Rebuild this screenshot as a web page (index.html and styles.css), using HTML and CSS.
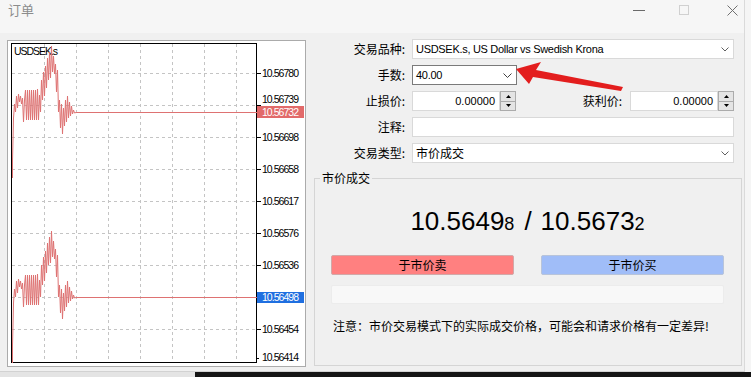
FILE: index.html
```html
<!DOCTYPE html>
<html lang="zh-CN">
<head>
<meta charset="utf-8">
<title>订单</title>
<link rel="stylesheet" href="styles.css">
</head>
<body>
<div class="window">
  <div class="titlebar">
    <span class="title">订单</span>
    <div class="controls">
      <span class="ctl ctl-min"><svg width="12" height="1" viewBox="0 0 12 1"><path d="M0 0.5H12" stroke="#6a6a6a" stroke-width="1"/></svg></span>
      <span class="ctl ctl-max"><svg width="10" height="10" viewBox="0 0 10 10"><rect x="0.5" y="0.5" width="9" height="9" fill="none" stroke="#d0d0d0"/></svg></span>
      <span class="ctl ctl-close"><svg width="11" height="11" viewBox="0 0 11 11"><path d="M0.5 0.5L10.5 10.5M10.5 0.5L0.5 10.5" stroke="#707070" stroke-width="1"/></svg></span>
    </div>
  </div>
  <div class="content">
    <div class="chart-panel">
      <svg class="chart" width="297" height="325" viewBox="8 41 297 325">
        <g class="grid">
          <path d="M44.5 44V362M76.5 44V362M108.5 44V362M140.5 44V362M172.5 44V362M204.5 44V362M236.5 44V362"/>
          <path d="M12 73.5H256M12 105.5H256M12 137.5H256M12 169.5H256M12 201.5H256M12 233.5H256M12 265.5H256M12 297.5H256M12 329.5H256"/>
        </g>
        <rect x="11.5" y="43.5" width="245" height="319" fill="none" stroke="#000" stroke-width="1"/>
        <path class="ticks" d="M257 73.5H261M257 105.5H261M257 137.5H261M257 169.5H261M257 201.5H261M257 233.5H261M257 265.5H261M257 329.5H261M257 358.5H259"/>
        <text class="sym" x="14" y="55" textLength="44">USDSEK.s</text>
        <polyline id="series" class="red-series" points="12.5,178 12.5,160 13,140 13.5,118 14.5,104 15.5,112 16.5,96 17.5,108 18.5,94 19.5,102 20.5,96 21.5,104 22.5,98 23.5,122 24.5,100 25.5,90 26.5,120 27.5,90 28.5,120 29.5,90 30.5,120 31.5,90 32.5,120 33.5,90 34.5,120 35.5,90 36.5,120 37.5,89 38.5,120 39.5,95 40.5,112 41.5,80 42.5,100 43.5,72 44.5,96 45.5,66 46.5,88 47.5,58 48.5,80 49.5,52 50.5,78 51.5,46 52.5,72 53.5,56 54.5,74 55.5,64 56.5,92 57.5,70 58.5,112 59.5,100 60.5,128 61.5,104 62.5,134 63.5,108 64.5,126 65.5,100 66.5,122 67.5,96 68.5,118 69.5,102 70.5,116 71.5,106 72.5,114 73.5,110 74.5,113 76,112.5 257,112.5"/>
        <use href="#series" class="blue-series" transform="translate(0,185)"/>
        <g class="axis">
          <text x="262" y="77" textLength="37">10.56780</text>
          <text x="262" y="103" textLength="37">10.56739</text>
          <text x="262" y="141" textLength="37">10.56698</text>
          <text x="262" y="173" textLength="37">10.56658</text>
          <text x="262" y="205" textLength="37">10.56617</text>
          <text x="262" y="237" textLength="37">10.56576</text>
          <text x="262" y="269" textLength="37">10.56536</text>
          <text x="262" y="333" textLength="37">10.56454</text>
          <text x="262" y="361" textLength="37">10.56414</text>
        </g>
        <rect class="tag-red" x="257" y="106" width="47" height="12"/>
        <text class="axis tag-text" x="262" y="116" textLength="37">10.56732</text>
        <rect class="tag-blue" x="257" y="292" width="47" height="11"/>
        <text class="axis tag-text" x="262" y="301" textLength="37">10.56498</text>
      </svg>
    </div>
    <div class="pane">
      <div class="form">
        <label class="lbl">交易品种:</label>
        <div class="combo"><span class="txt">USDSEK.s, US Dollar vs Swedish Krona</span><svg class="chev" width="8" height="5" viewBox="0 0 8 5"><path d="M0.5 0.5L4 4L7.5 0.5" fill="none" stroke="#606060"/></svg></div>
        <label class="lbl">手数:</label>
        <div class="cell"><div class="combo lots"><span class="txt">40.00</span><svg class="chev" width="9" height="5" viewBox="0 0 9 5"><path d="M0.5 0.5L4.5 4.5L8.5 0.5" fill="none" stroke="#404040"/></svg></div></div>
        <label class="lbl">止损价:</label>
        <div class="pair">
          <div class="spin">
            <span class="num">0.00000</span>
            <span class="spinner"><span class="half"><svg width="5" height="3" viewBox="0 0 5 3"><path d="M0 3L2.5 0L5 3Z" fill="#000"/></svg></span><span class="half low"><svg width="5" height="3" viewBox="0 0 5 3"><path d="M0 0L2.5 3L5 0Z" fill="#000"/></svg></span></span>
          </div>
          <label class="lbl mid">获利价:</label>
          <div class="spin">
            <span class="num">0.00000</span>
            <span class="spinner"><span class="half"><svg width="5" height="3" viewBox="0 0 5 3"><path d="M0 3L2.5 0L5 3Z" fill="#000"/></svg></span><span class="half low"><svg width="5" height="3" viewBox="0 0 5 3"><path d="M0 0L2.5 3L5 0Z" fill="#000"/></svg></span></span>
          </div>
        </div>
        <label class="lbl">注释:</label>
        <div class="edit"></div>
        <label class="lbl">交易类型:</label>
        <div class="combo"><span class="txt cjk">市价成交</span><svg class="chev" width="8" height="5" viewBox="0 0 8 5"><path d="M0.5 0.5L4 4L7.5 0.5" fill="none" stroke="#606060"/></svg></div>
      </div>
      <div class="group">
        <span class="legend">市价成交</span>
        <div class="quote">10.5649<small>8</small><span class="slash">/</span>10.5673<small>2</small></div>
        <div class="actions">
          <button class="btn sell">于市价卖</button>
          <button class="btn buy">于市价买</button>
        </div>
        <div class="progress"></div>
        <p class="note">注意：市价交易模式下的实际成交价格，可能会和请求价格有一定差异!</p>
      </div>
    </div>
  </div>
</div>
<div class="desk"></div>
<svg class="arrow" width="751" height="377" viewBox="0 0 751 377">
  <polygon points="516,69 541,62 536,70 623,87 621,91 533,77 529,84" fill="#e31e1e"/>
</svg>
</body>
</html>
```
FILE: styles.css
```css
* { box-sizing: border-box; }

body {
  margin: 0;
  width: 751px;
  height: 377px;
  overflow: hidden;
  position: relative;
  background: #f5f5f5;
  font-family: "Liberation Sans", "Noto Sans CJK SC", sans-serif;
  font-size: 12px;
  color: #000;
}

.window {
  width: 745px;
  height: 372px;
  background: #f0f0f0;
  border-right: 1px solid #dadada;
  border-bottom: 1px solid #d2d2d2;
}

.titlebar {
  height: 33px;
  background: #f6f6f6;
  display: flex;
  align-items: flex-start;
}

.title {
  margin: 1px 0 0 8px;
  font-family: "Noto Sans CJK SC", sans-serif;
  font-size: 13px;
  line-height: 18px;
  color: #8c8c8c;
}

.controls {
  margin-left: auto;
  display: flex;
  align-items: flex-start;
  padding-right: 6px;
}

.ctl { display: block; }
.ctl svg { display: block; }
.ctl-min { margin-top: 10px; }
.ctl-max { margin: 5px 0 0 34px; }
.ctl-close { margin: 5px 0 0 38px; }

.content {
  display: flex;
  padding: 7px 0 0 7px;
  height: 338px;
}

.chart-panel {
  width: 299px;
  height: 327px;
  border: 1px solid #ababab;
  background: #fff;
}

.chart { display: block; }

.grid path {
  fill: none;
  stroke: #c4c4c4;
  stroke-width: 1;
  stroke-dasharray: 3 3;
}

.ticks { stroke: #000; stroke-width: 1; }

.sym, .axis {
  font-family: "Liberation Sans", sans-serif;
  font-size: 10.5px;
  fill: #000;
}

.red-series {
  fill: none;
  stroke: #de7272;
  stroke-width: 1;
}

.blue-series {
  stroke: #1f5fbf;
}

.tag-red { fill: #e26a6a; }
.tag-blue { fill: #1f6fe0; }
.tag-text { fill: #fff; }

.pane {
  margin: -1px 0 0 8px;
  width: 428px;
}

.form {
  display: grid;
  grid-template-columns: 91px 322px;
  column-gap: 7px;
  row-gap: 6px;
  grid-auto-rows: 20px;
}

.lbl {
  text-align: right;
  line-height: 20px;
  font-family: "Noto Sans CJK SC", sans-serif;
  font-size: 12px;
  white-space: nowrap;
}

.combo {
  display: flex;
  align-items: center;
  height: 20px;
  background: #fff;
  border: 1px solid #d9d9d9;
  padding: 0 4px 0 3px;
}

.combo .txt {
  flex: 1;
  white-space: nowrap;
  line-height: 18px;
  font-size: 11px;
  letter-spacing: -0.3px;
}

.combo .txt.cjk {
  font-family: "Noto Sans CJK SC", sans-serif;
  font-size: 12px;
  letter-spacing: 0;
}

.chev { display: block; }

.lots {
  width: 105px;
  border-color: #7a7a7a;
}

.pair { display: flex; }

.spin {
  display: flex;
  width: 104px;
  height: 20px;
}

.num {
  width: 88px;
  background: #fff;
  border: 1px solid #d9d9d9;
  text-align: right;
  padding-right: 4px;
  line-height: 18px;
  font-size: 11px;
}

.spinner {
  width: 16px;
  border: 1px solid #ababab;
  background: #e4e4e4;
  display: flex;
  flex-direction: column;
}

.half {
  flex: 1;
  display: flex;
  align-items: center;
  justify-content: center;
}

.half.low { border-top: 1px solid #ababab; }

.mid {
  flex: 1;
  padding-right: 8px;
}

.edit {
  background: #fff;
  border: 1px solid #d9d9d9;
  height: 20px;
}

.group {
  position: relative;
  margin-top: 15px;
  height: 188px;
  border: 1px solid #d5d5d5;
  padding: 27px 17px 0 16px;
}

.legend {
  position: absolute;
  left: 5px;
  top: -8px;
  padding: 0 2px;
  background: #f0f0f0;
  line-height: 14px;
  font-family: "Noto Sans CJK SC", sans-serif;
  font-size: 12px;
}

.quote {
  height: 30px;
  line-height: 30px;
  font-size: 26px;
  text-align: center;
  white-space: nowrap;
}

.quote small { font-size: 18px; }
.quote .slash { margin: 0 9px 0 10px; }

.actions {
  display: flex;
  justify-content: space-between;
  margin-top: 19px;
}

.btn {
  width: 183px;
  height: 20px;
  padding: 0;
  border: 1px solid #c9c9c9;
  border-radius: 2px;
  font-family: "Noto Sans CJK SC", sans-serif;
  font-size: 12px;
  line-height: 18px;
  color: #000;
}

.sell { background: #ff8080; border-color: #d2a8a8; }
.buy { background: #a0bdf8; border-color: #b8c4da; }

.progress {
  margin-top: 10px;
  height: 19px;
  background: #f8f8f8;
  border: 1px solid #ececec;
  border-radius: 2px;
}

.note {
  margin: 14px 0 0 2px;
  line-height: 16px;
  font-family: "Noto Sans CJK SC", sans-serif;
  font-size: 12px;
}

.desk {
  height: 5px;
  background: linear-gradient(to right, #e4e4e4 0, #e4e4e4 195px, #151515 195px, #151515 100%);
}

.arrow {
  position: absolute;
  left: 0;
  top: 0;
  pointer-events: none;
}
```
